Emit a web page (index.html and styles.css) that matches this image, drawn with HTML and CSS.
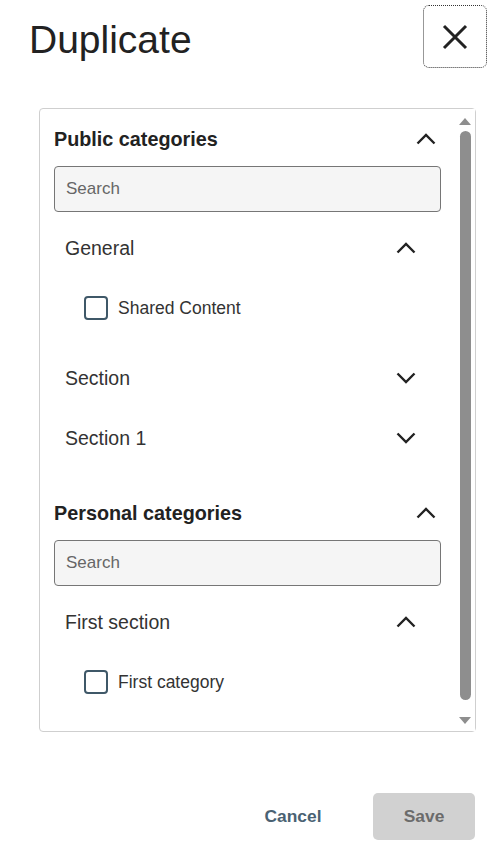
FILE: index.html
```html
<!DOCTYPE html>
<html lang="en">
<head>
<meta charset="utf-8">
<title>Duplicate</title>
<link rel="stylesheet" href="styles.css">
</head>
<body>
<div class="dialog">
  <header class="dialog-header">
    <h1 class="dialog-title">Duplicate</h1>
    <button class="close-btn" aria-label="Close">
      <svg width="26" height="26" viewBox="0 0 26 26" aria-hidden="true"><path d="M2 2 L24 24 M24 2 L2 24" stroke="#222" stroke-width="3" fill="none"/></svg>
    </button>
  </header>

  <div class="panel">
    <div class="panel-content">
      <div class="panel-inner">
        <section class="cat">
          <div class="cat-head">
            <span class="cat-title">Public categories</span>
            <svg class="chev" width="20" height="12" viewBox="0 0 20 12"><path d="M1.5 10.5 L10 2 L18.5 10.5" stroke="#222" stroke-width="2.4" fill="none"/></svg>
          </div>
          <div class="search"><input class="search-input" type="text" placeholder="Search"></div>
          <div class="sub">
            <div class="sub-head">
              <span class="sub-title">General</span>
              <svg class="chev" width="20" height="12" viewBox="0 0 20 12"><path d="M1.5 10.5 L10 2 L18.5 10.5" stroke="#222" stroke-width="2.4" fill="none"/></svg>
            </div>
            <div class="items">
              <label class="item"><span class="box"></span><span class="item-label">Shared Content</span></label>
            </div>
          </div>
          <div class="sub">
            <div class="sub-head">
              <span class="sub-title">Section</span>
              <svg class="chev" width="20" height="12" viewBox="0 0 20 12"><path d="M1.5 1.5 L10 10 L18.5 1.5" stroke="#222" stroke-width="2.4" fill="none"/></svg>
            </div>
          </div>
          <div class="sub">
            <div class="sub-head">
              <span class="sub-title">Section 1</span>
              <svg class="chev" width="20" height="12" viewBox="0 0 20 12"><path d="M1.5 1.5 L10 10 L18.5 1.5" stroke="#222" stroke-width="2.4" fill="none"/></svg>
            </div>
          </div>
        </section>

        <section class="cat">
          <div class="cat-head">
            <span class="cat-title">Personal categories</span>
            <svg class="chev" width="20" height="12" viewBox="0 0 20 12"><path d="M1.5 10.5 L10 2 L18.5 10.5" stroke="#222" stroke-width="2.4" fill="none"/></svg>
          </div>
          <div class="search"><input class="search-input" type="text" placeholder="Search"></div>
          <div class="sub">
            <div class="sub-head">
              <span class="sub-title">First section</span>
              <svg class="chev" width="20" height="12" viewBox="0 0 20 12"><path d="M1.5 10.5 L10 2 L18.5 10.5" stroke="#222" stroke-width="2.4" fill="none"/></svg>
            </div>
            <div class="items">
              <label class="item"><span class="box"></span><span class="item-label">First category</span></label>
            </div>
          </div>
        </section>
      </div>
    </div>
    <div class="scrollbar" aria-hidden="true">
      <div class="sb-btn sb-up">
        <svg width="12" height="7" viewBox="0 0 12 7"><path d="M6 0 L12 7 L0 7 Z" fill="#8e8e8e"/></svg>
      </div>
      <div class="sb-track"><div class="sb-thumb"></div></div>
      <div class="sb-btn sb-down">
        <svg width="12" height="7" viewBox="0 0 12 7"><path d="M0 0 L12 0 L6 7 Z" fill="#8e8e8e"/></svg>
      </div>
    </div>
  </div>

  <footer class="dialog-footer">
    <button class="btn btn-cancel">Cancel</button>
    <button class="btn btn-save" disabled>Save</button>
  </footer>
</div>
</body>
</html>
```

FILE: styles.css
```css
* { box-sizing: border-box; }
html, body { margin: 0; padding: 0; background: #fff; }
body {
  font-family: "Liberation Sans", Arial, sans-serif;
  color: #222;
}
.dialog {
  width: 500px;
  height: 850px;
  padding: 5px 13px 0 30px;
}
.dialog-header {
  display: flex;
  justify-content: space-between;
  align-items: flex-start;
  height: 103px;
}
.dialog-title {
  margin: 12px 0 0 -1px;
  font-size: 39px;
  font-weight: normal;
  line-height: 46px;
  color: #222;
}
.close-btn {
  width: 64px;
  height: 63px;
  border: 1px dotted #333;
  border-radius: 6px;
  background: #fff;
  display: flex;
  align-items: center;
  justify-content: center;
  padding: 0;
  margin: 0;
}
.panel {
  margin-left: 9px;
  width: 437px;
  height: 624px;
  border: 1px solid #cfcfcf;
  border-radius: 4px;
  display: flex;
}
.panel-content {
  flex: 1;
  min-width: 0;
  overflow: hidden;
}
.scrollbar {
  width: 17px;
  display: flex;
  flex-direction: column;
  background: #fff;
}
.sb-btn {
  height: 20px;
  display: flex;
  justify-content: flex-start;
  padding-left: 1px;
}
.sb-up { align-items: flex-end; padding-bottom: 4px; }
.sb-down { align-items: flex-start; padding-top: 6px; }
.sb-track {
  flex: 1;
  padding: 2px 4px 11px 2px;
}
.sb-thumb {
  height: 100%;
  background: #8e8e8e;
  border-radius: 6px;
}
.panel-inner {
  padding: 14px 17px 30px 14px;
}
.cat + .cat { margin-top: 29px; }
.cat-head {
  height: 32px;
  display: flex;
  align-items: center;
  justify-content: space-between;
  padding-right: 5px;
  margin-bottom: 11px;
}
.cat-title {
  font-size: 19.8px;
  font-weight: bold;
  color: #222;
}
.search-input {
  display: block;
  width: 100%;
  height: 46px;
  border: 1px solid #767676;
  border-radius: 4px;
  background: #f5f5f5;
  padding: 0 11px;
  font-family: "Liberation Sans", Arial, sans-serif;
  font-size: 17px;
  color: #222;
  outline: none;
}
.search-input::placeholder { color: #666; }
.search + .sub { margin-top: 6px; }
.sub-head {
  height: 60px;
  display: flex;
  align-items: center;
  justify-content: space-between;
  padding: 0 25px 0 11px;
}
.sub-title {
  font-size: 19.5px;
  color: #333;
}
.items { padding-bottom: 10px; }
.item {
  height: 60px;
  display: flex;
  align-items: center;
  gap: 10px;
  padding-left: 30px;
}
.box {
  width: 24px;
  height: 24px;
  border: 2px solid #3f5868;
  border-radius: 4px;
  background: #fff;
}
.item-label {
  font-size: 17.5px;
  color: #333;
}
.dialog-footer {
  display: flex;
  justify-content: flex-end;
  align-items: center;
  gap: 29px;
  margin-top: 61px;
  padding-right: 12px;
}
.btn {
  width: 102px;
  height: 47px;
  border: none;
  border-radius: 5px;
  font-family: "Liberation Sans", Arial, sans-serif;
  font-size: 17.4px;
  font-weight: bold;
  padding: 0;
}
.btn-cancel {
  background: transparent;
  color: #4a6273;
}
.btn-save {
  background: #d1d1d1;
  color: #6b6b6b;
}
```
